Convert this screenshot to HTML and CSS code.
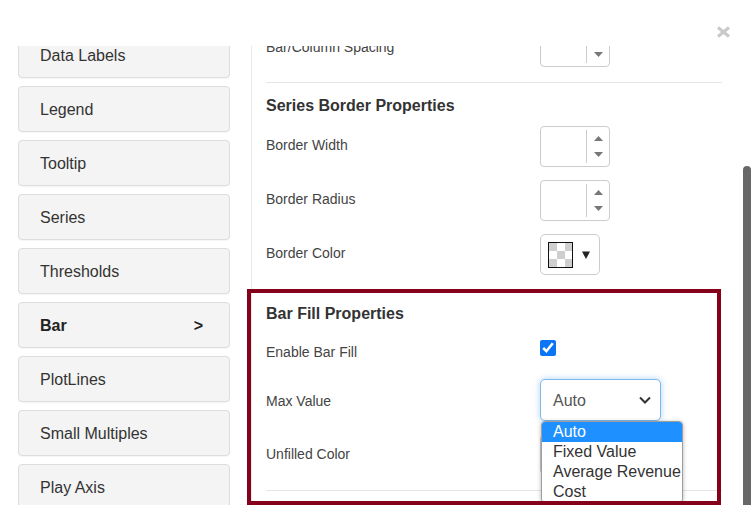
FILE: index.html
```html
<!DOCTYPE html>
<html lang="en">
<head>
<meta charset="utf-8">
<title>Chart Settings</title>
<link rel="stylesheet" href="styles.css">
</head>
<body>
<div class="modal">
  <div class="modal-header">
    <button class="close" aria-label="Close">
      <svg width="15" height="12" viewBox="0 0 15 12"><path d="M2 1.5 L13 10.5 M13 1.5 L2 10.5" stroke="#c9c9c9" stroke-width="3" stroke-linecap="butt"/></svg>
    </button>
  </div>
  <div class="modal-body">
    <div class="scroll">
      <div class="content">
        <nav class="sidebar">
          <div class="nav-item">Data Labels</div>
          <div class="nav-item">Legend</div>
          <div class="nav-item">Tooltip</div>
          <div class="nav-item">Series</div>
          <div class="nav-item">Thresholds</div>
          <div class="nav-item active"><span>Bar</span><span>&gt;</span></div>
          <div class="nav-item">PlotLines</div>
          <div class="nav-item">Small Multiples</div>
          <div class="nav-item">Play Axis</div>
        </nav>
        <div class="panel">
          <div class="row row-first">
            <label class="label">Bar/Column Spacing</label>
            <div class="spinner"><span class="spin-field"></span><span class="spin-btns"><svg width="9" height="5" viewBox="0 0 9 5"><polygon points="0,5 4.5,0 9,5" fill="#777"/></svg><svg width="9" height="5" viewBox="0 0 9 5"><polygon points="0,0 9,0 4.5,5" fill="#777"/></svg></span></div>
          </div>
          <div class="divider"></div>
          <h4 class="heading">Series Border Properties</h4>
          <div class="row">
            <label class="label">Border Width</label>
            <div class="spinner"><span class="spin-field"></span><span class="spin-btns"><svg width="9" height="5" viewBox="0 0 9 5"><polygon points="0,5 4.5,0 9,5" fill="#777"/></svg><svg width="9" height="5" viewBox="0 0 9 5"><polygon points="0,0 9,0 4.5,5" fill="#777"/></svg></span></div>
          </div>
          <div class="row">
            <label class="label">Border Radius</label>
            <div class="spinner"><span class="spin-field"></span><span class="spin-btns"><svg width="9" height="5" viewBox="0 0 9 5"><polygon points="0,5 4.5,0 9,5" fill="#777"/></svg><svg width="9" height="5" viewBox="0 0 9 5"><polygon points="0,0 9,0 4.5,5" fill="#777"/></svg></span></div>
          </div>
          <div class="row">
            <label class="label">Border Color</label>
            <div class="color-pick"><span class="swatch"></span><svg width="8" height="8" viewBox="0 0 8 8"><polygon points="0,0.5 8,0.5 4,8" fill="#222"/></svg></div>
          </div>
          <div class="section highlighted">
            <div class="divider flush"></div>
            <h4 class="heading">Bar Fill Properties</h4>
            <div class="row row-short">
              <label class="label">Enable Bar Fill</label>
              <input class="check" type="checkbox" checked>
            </div>
            <div class="row row-select">
              <label class="label">Max Value</label>
              <div class="select-wrap">
                <div class="select"><span>Auto</span><svg width="12" height="8" viewBox="0 0 12 8"><polyline points="1,1.5 6,6.5 11,1.5" fill="none" stroke="#333" stroke-width="2"/></svg></div>
                <ul class="dropdown">
                  <li class="selected">Auto</li>
                  <li>Fixed Value</li>
                  <li>Average Revenue</li>
                  <li>Cost</li>
                </ul>
              </div>
            </div>
            <div class="row row-last">
              <label class="label">Unfilled Color</label>
              <div class="color-pick"><span class="swatch"></span><svg width="8" height="8" viewBox="0 0 8 8"><polygon points="0,0.5 8,0.5 4,8" fill="#222"/></svg></div>
            </div>
            <div class="divider"></div>
          </div>
        </div>
      </div>
    </div>
    <div class="scrollbar"><div class="thumb"></div></div>
  </div>
</div>
</body>
</html>
```
FILE: styles.css
```css
* { box-sizing: border-box; }
html, body { margin: 0; padding: 0; background: #fff; }
body {
  font-family: "Liberation Sans", Arial, sans-serif;
  color: #333;
  width: 752px;
  height: 505px;
  overflow: hidden;
}
.modal { width: 752px; height: 505px; display: flex; flex-direction: column; }
.modal-header {
  height: 46px;
  flex: 0 0 46px;
  display: flex;
  justify-content: flex-end;
  align-items: flex-start;
  padding: 26px 21px 0 0;
}
.close { border: 0; background: none; padding: 0; margin: 0; width: 15px; height: 12px; display: block; cursor: pointer; }
.close svg { display: block; }
.modal-body { flex: 1; display: flex; overflow: hidden; }
.scroll { flex: 1; overflow: hidden; }
.content { margin-top: -20px; display: flex; }
.sidebar { width: 251px; flex: 0 0 251px; padding: 6px 21px 0 18px; }
.nav-item {
  height: 46px;
  margin-bottom: 8px;
  background: #f4f4f4;
  border: 1px solid #dddddd;
  border-radius: 4px;
  box-shadow: 0 1px 1px rgba(0,0,0,0.04);
  padding: 2px 26px 0 21px;
  display: flex;
  align-items: center;
  justify-content: space-between;
  font-size: 16px;
  color: #333;
}
.nav-item.active { font-weight: bold; color: #222; }
.panel { flex: 1; border-left: 1px solid #e8e8e8; padding: 0 21px 0 14px; min-height: 600px; }
.row { display: flex; align-items: center; height: 41px; }
.row + .row { margin-top: 13px; }
.row-short { height: 32px; align-items: flex-start; }
.row-short .label { margin-top: 10px; }
.row-select { height: 42px; }
.label { flex: 0 0 274px; font-size: 14px; color: #444; margin-bottom: 3px; }
.row-short .label, .row-select .label, .row-first .label { margin-bottom: 0; }
.row-last .label { margin-bottom: 1px; }
.row-select .label { margin-top: 2px; }
.divider { border-top: 1px solid #e6e6e6; margin-top: 15px; }
.divider.flush { margin-top: 0; }
.heading { margin: 13px 0 10px; font-size: 16px; line-height: 20px; font-weight: bold; color: #333; }
.spinner {
  width: 70px;
  height: 41px;
  border: 1px solid #cccccc;
  border-radius: 4px;
  display: flex;
  background: #fff;
}
.spin-field { flex: 1; }
.spin-btns {
  width: 23px;
  margin: 3px 0;
  border-left: 1px solid #cccccc;
  display: flex;
  flex-direction: column;
  justify-content: space-around;
  align-items: center;
}
.spin-btns svg { display: block; }
.color-pick {
  width: 60px;
  height: 41px;
  border: 1px solid #cccccc;
  border-radius: 5px;
  display: flex;
  align-items: center;
  padding-left: 7px;
  gap: 9px;
  background: #fff;
}
.swatch {
  width: 25px;
  height: 26px;
  border: 1px solid #111;
  background: conic-gradient(#fff 0 25%, #cfcfcf 0 50%, #fff 0 75%, #cfcfcf 0) 0 0 / 16px 16px;
}
.color-pick svg { display: block; }
.check { width: 16px; height: 16px; margin: 6px 0 0 0; accent-color: #0b75f5; }
.section { position: relative; margin-top: 15px; }
.section.highlighted::after {
  content: "";
  position: absolute;
  top: -1px;
  left: -19px;
  right: 1px;
  bottom: -14px;
  border: 4px solid #85001b;
  pointer-events: none;
  z-index: 10;
}
.select-wrap { position: relative; }
.select {
  width: 121px;
  height: 42px;
  border: 1px solid #7fb8ea;
  border-radius: 5px;
  box-shadow: 0 0 6px rgba(102,175,233,0.55);
  display: flex;
  align-items: center;
  justify-content: space-between;
  padding: 0 9px 0 12px;
  font-size: 16px;
  color: #555;
  background: #fff;
}
.select span { margin-top: 2px; }
.select svg { display: block; }
.dropdown {
  position: absolute;
  top: 42px;
  left: 1px;
  width: 142px;
  margin: 0;
  padding: 0;
  list-style: none;
  background: #fff;
  border: 1px solid #9e9e9e;
  border-radius: 4px;
  box-shadow: 0 1px 4px rgba(0,0,0,0.3);
  z-index: 5;
  overflow: hidden;
}
.dropdown li {
  font-size: 16px;
  line-height: 20px;
  padding-left: 11px;
  color: #333;
  white-space: nowrap;
}
.dropdown li.selected { background: #1e90ff; color: #fff; }
.scrollbar { flex: 0 0 9px; width: 9px; display: flex; flex-direction: column; }
.thumb { margin-top: 120px; flex: 1; width: 8px; background: #686868; border-radius: 4px 4px 0 0; }
```
